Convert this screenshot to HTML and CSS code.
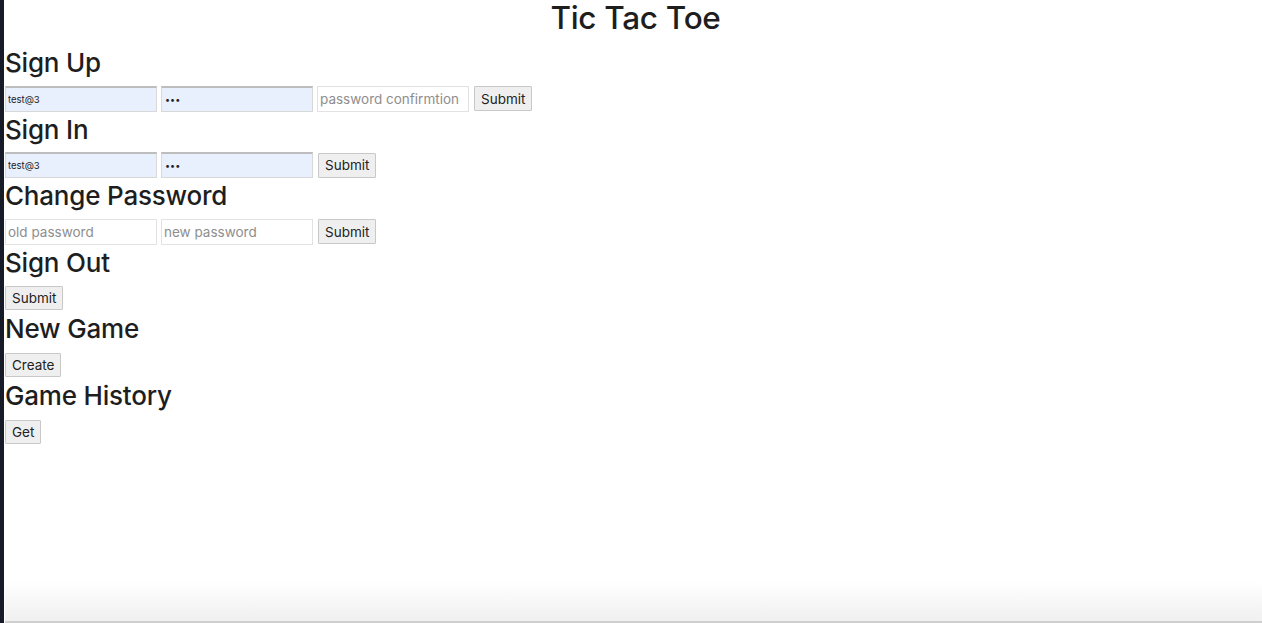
FILE: index.html
```html
<!DOCTYPE html>
<html lang="en">
<head>
<meta charset="utf-8">
<title>Tic Tac Toe</title>
<link rel="stylesheet" href="styles.css">
</head>
<body>
<div class="frame">
  <div class="edge"></div>
  <div class="window">
    <main class="page">
      <h1 class="title">Tic Tac Toe</h1>

      <section class="block">
        <h2 class="heading">Sign Up</h2>
        <form class="row">
          <input class="field filled" type="text" value="test@3">
          <input class="field filled dots" type="password" value="abc">
          <input class="field" type="password" placeholder="password confirmtion">
          <button class="btn" type="button">Submit</button>
        </form>
      </section>

      <section class="block">
        <h2 class="heading">Sign In</h2>
        <form class="row">
          <input class="field filled" type="text" value="test@3">
          <input class="field filled dots" type="password" value="abc">
          <button class="btn" type="button">Submit</button>
        </form>
      </section>

      <section class="block">
        <h2 class="heading">Change Password</h2>
        <form class="row">
          <input class="field" type="password" placeholder="old password">
          <input class="field" type="password" placeholder="new password">
          <button class="btn" type="button">Submit</button>
        </form>
      </section>

      <section class="block">
        <h2 class="heading">Sign Out</h2>
        <form class="row">
          <button class="btn small" type="button">Submit</button>
        </form>
      </section>

      <section class="block">
        <h2 class="heading">New Game</h2>
        <form class="row">
          <button class="btn small" type="button">Create</button>
        </form>
      </section>

      <section class="block">
        <h2 class="heading">Game History</h2>
        <form class="row">
          <button class="btn small" type="button">Get</button>
        </form>
      </section>
    </main>
    <div class="shade"></div>
  </div>
</div>
</body>
</html>
```

FILE: styles.css
```css
html, body {
  margin: 0;
  padding: 0;
  height: 100%;
}

body {
  font-family: Inter, "Liberation Sans", Arial, sans-serif;
  color: #222;
  background: #fff;
}

.frame {
  display: flex;
  height: 100vh;
}

.edge {
  width: 4px;
  flex: none;
  background: #161b27;
}

.window {
  flex: 1;
  display: flex;
  flex-direction: column;
  padding-left: 1px;
  background: #fff;
}

.page {
  flex: 1;
}

.title {
  margin: 0;
  height: 45px;
  font-size: 31.5px;
  font-weight: 500;
  line-height: 36px;
  text-align: center;
  color: #1e1e1e;
  padding-left: 4px;
  letter-spacing: -0.3px;
}

.block {
  display: flex;
  flex-direction: column;
}

.heading {
  margin: 0;
  height: 40.6px;
  font-size: 26px;
  font-weight: 500;
  line-height: 36px;
  color: #1e1e1e;
  letter-spacing: -0.2px;
}

.row {
  display: flex;
  align-items: center;
  gap: 4px;
  margin: 0;
  height: 26px;
}

.field {
  box-sizing: border-box;
  width: 152px;
  height: 26px;
  margin: 0;
  padding: 0 2px;
  border: 1px solid #e2e2e2;
  background: #fff;
  font-family: Inter, "Liberation Sans", Arial, sans-serif;
  font-size: 13.5px;
  color: #222;
  outline: none;
}

.field::placeholder {
  color: #8e8e8e;
}

.field.filled {
  background: #e8f0fe;
  border-color: #d8d8d8;
  border-top: 2px solid #bdbdbd;
  font-size: 9.5px;
}

.field.dots {
  font-size: 9px;
  padding-left: 3px;
}

.btn {
  box-sizing: border-box;
  height: 25px;
  margin: 0 0 0 1px;
  padding: 0 6px;
  border: 1px solid #c8c8c8;
  border-radius: 1px;
  background: #efefef;
  font-family: Inter, "Liberation Sans", Arial, sans-serif;
  font-size: 13.5px;
  color: #222;
}

.btn.small {
  margin-left: 0;
  height: 24px;
  padding: 0 6px;
}

.shade {
  flex: none;
  height: 40px;
  background: linear-gradient(to bottom, rgba(240,240,240,0) 0%, #f1f1f1 92%);
  border-bottom: 2px solid #cfcfcf;
}
```
